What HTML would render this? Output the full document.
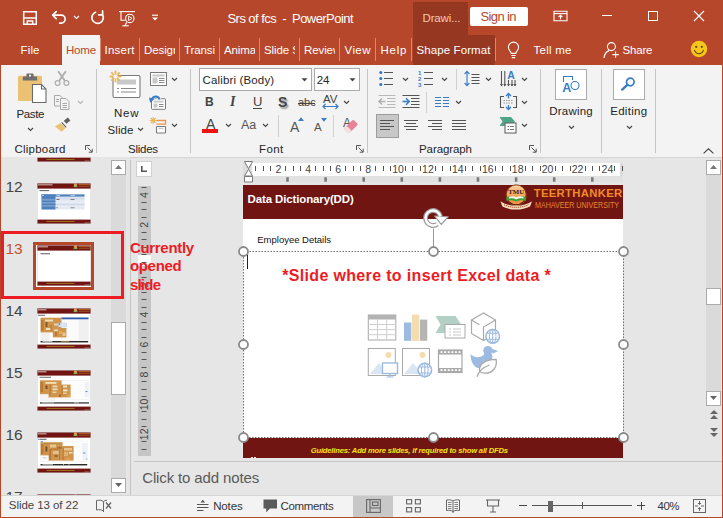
<!DOCTYPE html>
<html lang="en">
<head>
<meta charset="utf-8">
<title>Srs of fcs - PowerPoint</title>
<style>
html,body{margin:0;padding:0;}
body{width:723px;height:518px;overflow:hidden;background:#e6e6e6;font-family:"Liberation Sans",sans-serif;}
#app{position:relative;width:723px;height:518px;overflow:hidden;background:#e6e6e6;}
.a{position:absolute;}
.t{position:absolute;white-space:nowrap;line-height:1;font-size:11.5px;color:#262626;transform-origin:0 0;}
.w{color:#fff;}
svg{position:absolute;overflow:visible;}
/* sections */
#titlebar{left:0;top:0;width:723px;height:65px;background:#b7472a;}
#ribbon{left:1px;top:65px;width:721px;height:91.500px;background:#f3f3f3;border-bottom:1px solid #d4d4d4;}
#hometab{left:62px;top:35px;width:38px;height:31px;background:#f3f3f3;}
#ctxtab1{left:413px;top:2px;width:55px;height:33px;background:#963721;}
#ctxtab2{left:413px;top:35px;width:82px;height:30px;background:#963721;}
.sep{position:absolute;width:1px;background:#c6c6c6;}
.tsep{position:absolute;width:1px;background:#d58a75;top:38px;height:23px;}
</style>
</head>
<body>
<div id="app">

<!-- ===== TITLE BAR + TABS ===== -->
<div class="a" id="titlebar"></div>
<div class="a" id="ctxtab1"></div>
<div class="a" id="ctxtab2"></div>
<div class="a" id="hometab"></div>


<!-- quick access toolbar -->
<svg style="left:22px;top:10px" width="16" height="16" viewBox="0 0 16 16" fill="none" stroke="#fff" stroke-width="1.500">
  <path d="M1.700 1.700h12.600v12.600H1.700z"/><path d="M1.700 8h12.600"/><path d="M5.300 14.300v-3.400h5.400v3.400"/>
</svg>
<svg style="left:51px;top:10px" width="17" height="15" viewBox="0 0 17 15" fill="none" stroke="#fff" stroke-width="1.700" stroke-linecap="round" stroke-linejoin="round">
  <path d="M5.2 1.6 1.7 5.1l3.5 3.5"/><path d="M2 5.1h8.2a4 4 0 0 1 0 8H8.6"/>
</svg>
<svg style="left:73px;top:15px" width="7" height="5" viewBox="0 0 7 5" fill="none" stroke="#fff" stroke-width="1.1"><path d="M1 1l2.5 2.5L6 1"/></svg>
<svg style="left:90px;top:10px" width="16" height="15" viewBox="0 0 16 15" fill="none" stroke="#fff" stroke-width="1.700" stroke-linecap="round" stroke-linejoin="round">
  <path d="M5.600 2.300A5.700 5.700 0 1 0 12.400 4.600"/><path d="M12.600 0.900v3.900H8.700"/>
</svg>
<svg style="left:118px;top:10px" width="18" height="17" viewBox="0 0 18 17" fill="none" stroke="#fff" stroke-width="1.1">
  <path d="M1 1.6h16"/><path d="M3 1.6v8.6h4.6"/><circle cx="11.8" cy="8.4" r="4.2"/><path d="M10.6 6.2v4.4l3.4-2.2z" stroke-width="0.9"/><path d="M8.6 12.2l-1.6 3.6"/><path d="M4.4 15.8h6.4"/>
</svg>
<svg style="left:151px;top:14px" width="8" height="8" viewBox="0 0 8 8"><path d="M1 1.2h6" stroke="#fff" stroke-width="1.1"/><path d="M1 3.4h6L4 6.6z" fill="#fff"/></svg>

<span class="t w" id="ttl" style="top:11.5px;font-size:13px;letter-spacing:-0.56px;left:227.5px;">Srs of fcs &nbsp;- &nbsp;PowerPoint</span>
<span class="t" id="drawi" style="top:12.5px;font-size:11.5px;color:#f1c7b8;letter-spacing:-0.14px;left:422.5px;">Drawi...</span>
<div class="a" style="left:470px;top:7px;width:58px;height:19px;background:#fff;border-radius:2px;"></div>
<span class="t" id="signin" style="top:10px;font-size:13px;color:#b7472a;letter-spacing:-0.63px;left:480.5px;">Sign in</span>

<!-- window controls -->
<svg style="left:553px;top:10px" width="15" height="12" viewBox="0 0 15 12" fill="none" stroke="#fff" stroke-width="1.1">
  <path d="M1 1.2h13v9.6H1z"/><path d="M1 3.6h13"/><path d="M7.5 9.4V5.4"/><path d="M5.6 7l1.9-1.8L9.4 7"/>
</svg>
<div class="a" style="left:602px;top:15px;width:10px;height:1px;background:#fff;"></div>
<div class="a" style="left:648px;top:11px;width:8px;height:8px;border:1px solid #fff;"></div>
<svg style="left:694px;top:11px" width="10" height="10" viewBox="0 0 10 10" stroke="#fff" stroke-width="1.1"><path d="M0 0l10 10M10 0L0 10"/></svg>

<!-- tabs -->
<span class="t w" id="tb0" style="top:44.5px;letter-spacing:0.16px;left:20.5px;">File</span>
<div class="a" style="left:66px;top:41px;width:30px;height:22px;overflow:hidden;"><span class="t" id="tb1" style="left:0;top:3.500px;color:#b7472a;letter-spacing:-0.2px;">Home</span></div>
<span class="t w" id="tb2" style="top:44.5px;letter-spacing:0.25px;left:104.5px;">Insert</span>
<div class="a" style="left:144px;top:41px;width:31px;height:22px;overflow:hidden;"><span class="t w" id="tb3" style="left:0;top:3.500px;letter-spacing:-0.1px;">Design</span></div>
<div class="a" style="left:184px;top:41px;width:31px;height:22px;overflow:hidden;"><span class="t w" id="tb4" style="left:0;top:3.500px;letter-spacing:-0.1px;">Transitions</span></div>
<div class="a" style="left:224px;top:41px;width:31px;height:22px;overflow:hidden;"><span class="t w" id="tb5" style="left:0;top:3.500px;letter-spacing:-0.1px;">Animations</span></div>
<div class="a" style="left:264px;top:41px;width:31px;height:22px;overflow:hidden;"><span class="t w" id="tb6" style="left:0;top:3.500px;letter-spacing:-0.1px;">Slide Show</span></div>
<div class="a" style="left:304px;top:41px;width:31px;height:22px;overflow:hidden;"><span class="t w" id="tb7" style="left:0;top:3.500px;letter-spacing:-0.1px;">Review</span></div>
<span class="t w" id="tb8" style="top:44.5px;letter-spacing:0.42px;left:344.5px;">View</span>
<span class="t w" id="tb9" style="top:44.5px;letter-spacing:0.78px;left:380.5px;">Help</span>
<span class="t w" id="tb10" style="top:44.5px;letter-spacing:0.10px;left:416.5px;">Shape Format</span>
<span class="t w" id="tb11" style="top:44.5px;letter-spacing:0.26px;left:533.5px;">Tell me</span>
<span class="t w" id="tb12" style="top:44.5px;letter-spacing:-0.17px;left:622.5px;">Share</span>
<div class="tsep" style="left:100px"></div><div class="tsep" style="left:139px"></div><div class="tsep" style="left:179px"></div>
<div class="tsep" style="left:219px"></div><div class="tsep" style="left:259px"></div><div class="tsep" style="left:299px"></div>
<div class="tsep" style="left:339px"></div><div class="tsep" style="left:375px"></div><div class="tsep" style="left:411px"></div>
<div class="tsep" style="left:495px"></div>
<!-- bulb -->
<svg style="left:507px;top:41px" width="13" height="18" viewBox="0 0 13 18" fill="none" stroke="#fff" stroke-width="1.1">
  <path d="M4.2 12.4c0-2-2.8-3-2.8-6.2a5.1 5.1 0 0 1 10.2 0c0 3.200-2.800 4.200-2.800 6.200z"/><path d="M4.400 14.500h4.200M4.800 16.600h3.400"/>
</svg>
<!-- share person -->
<svg style="left:603px;top:41px" width="17" height="18" viewBox="0 0 17 18" fill="none" stroke="#fff" stroke-width="1.1">
  <circle cx="8.400" cy="5.600" r="4"/><path d="M1 17c.4-4.200 2.600-6.600 5.200-7.400"/><path d="M12.600 10.400v6.400M9.400 13.600h6.400"/>
</svg>
<!-- smiley -->
<svg style="left:690px;top:40px" width="18" height="18" viewBox="0 0 18 18">
  <circle cx="9" cy="9" r="8.200" fill="#f7c61a"/><circle cx="6.200" cy="6.800" r="1.100" fill="#5a4410"/><circle cx="11.800" cy="6.800" r="1.100" fill="#5a4410"/>
  <path d="M4.600 10.400c1 2.600 2.600 3.400 4.400 3.400s3.400-.8 4.400-3.400" fill="none" stroke="#5a4410" stroke-width="1.100" stroke-linecap="round"/>
</svg>

<!-- ===== RIBBON ===== -->
<div class="a" id="ribbon"></div>

<div class="sep" style="left:96px;top:69px;height:84px;"></div>
<div class="sep" style="left:190px;top:69px;height:84px;"></div>
<div class="sep" style="left:367px;top:69px;height:84px;"></div>
<div class="sep" style="left:540px;top:69px;height:84px;"></div>
<div class="sep" style="left:601px;top:69px;height:84px;"></div>
<div class="sep" style="left:655px;top:69px;height:84px;"></div>

<svg style="left:17px;top:72px" width="30" height="32" viewBox="0 0 30 32">
  <rect x="1" y="3.800" width="24" height="25.200" rx="1.500" fill="#ebc273"/>
  <path d="M5.800 8.400V5.600a1 1 0 0 1 1-1h2.600V2.400a1 1 0 0 1 1-1h5.200a1 1 0 0 1 1 1v2.200h2.600a1 1 0 0 1 1 1v2.800z" fill="#6e6e6e"/>
  <circle cx="13" cy="3.700" r="1.100" fill="#f3f3f3"/>
  <path d="M15.500 12.500h9l4.500 4.500v13.500h-13.500z" fill="#fff" stroke="#6a6a6a" stroke-width="1.100"/>
  <path d="M24.500 12.500v4.500h4.500" fill="none" stroke="#6a6a6a" stroke-width="1.100"/>
</svg>
<span class="t" id="rPaste" style="top:108.7px;letter-spacing:-0.36px;left:16.5px;">Paste</span>
<svg style="left:27.0px;top:127.0px" width="7" height="5" viewBox="0 0 7 5" fill="none" stroke="#444" stroke-width="1.1"><path d="M1 1l2.500 2.500L6 1"/></svg>

<svg style="left:54px;top:70px" width="16" height="17" viewBox="0 0 16 17" fill="none" stroke="#b0b0b0" stroke-width="1.300">
  <circle cx="3.600" cy="13" r="2.400"/><circle cx="12.400" cy="13" r="2.400"/><path d="M5 11L11.800 1.200M11 11L4.200 1.200" stroke-width="2"/>
</svg>
<svg style="left:54px;top:95px" width="16" height="15" viewBox="0 0 16 15" fill="#f3f3f3" stroke="#a9a9a9" stroke-width="1">
  <path d="M0.500 0.500h5.500l2.500 2.500v8h-8z"/><path d="M6.500 3.500h5.500l3 3v8h-8.500z"/><path d="M8.500 8.500h4.500M8.500 10.500h4.500M8.500 12.500h4.500M2 4.500h3M2 6.500h3"/>
</svg>
<svg style="left:77.0px;top:99.5px" width="7" height="5" viewBox="0 0 7 5" fill="none" stroke="#b5b5b5" stroke-width="1.1"><path d="M1 1l2.500 2.500L6 1"/></svg>

<svg style="left:54px;top:117px" width="18" height="16" viewBox="0 0 18 16">
  <path d="M9.800 3.800l4-3.400 2.600 3-4 3.400z" fill="#5f5f5f"/>
  <path d="M8 5l4.600 5-0.800 0.800-4.600-5z" fill="#5f5f5f"/>
  <path d="M6.600 6L1 9.600l6.600 5.200 3.800-3.600z" fill="#ebc273"/>
</svg>
<span class="t" id="rClip" style="top:143.5px;letter-spacing:0.22px;left:14.5px;">Clipboard</span>
<svg style="left:85px;top:145px" width="8" height="8" viewBox="0 0 8 8" fill="none" stroke="#555" stroke-width="1"><path d="M0.500 5V0.500H5"/><path d="M2.500 2.500l4.500 4.500"/><path d="M7.200 3.800v3.400H3.800"/></svg>

<svg style="left:109px;top:70px" width="33" height="29" viewBox="0 0 33 29">
  <rect x="4" y="5.500" width="27" height="22" rx="1.500" fill="#fff" stroke="#7a7a7a" stroke-width="1.100"/>
  <rect x="8" y="9.500" width="19" height="5" fill="#c8c8c8"/>
  <path d="M8 18.500h2M12 18.500h15M8 22h2M12 22h15" stroke="#8a8a8a" stroke-width="1"/>
  <g stroke="#e9b858" stroke-width="1.800"><path d="M6.500 0.500v12M0.500 6.500h12M2.300 2.300l8.400 8.400M10.700 2.300l-8.400 8.400"/></g>
  <circle cx="6.500" cy="6.500" r="2.200" fill="#f3f3f3"/>
</svg>
<span class="t" id="rNew" style="top:108px;letter-spacing:0.74px;left:114.0px;">New</span>
<span class="t" id="rSlide" style="top:124.5px;letter-spacing:0.11px;left:107.5px;">Slide</span>
<svg style="left:136.5px;top:127.0px" width="7" height="5" viewBox="0 0 7 5" fill="none" stroke="#444" stroke-width="1.1"><path d="M1 1l2.500 2.500L6 1"/></svg>

<svg style="left:150px;top:72px" width="17" height="14" viewBox="0 0 17 14" fill="none">
  <rect x="0.500" y="0.500" width="16" height="13" fill="#fff" stroke="#7a7a7a"/>
  <rect x="2.500" y="2.500" width="12" height="2" fill="#c8c8c8"/><rect x="2.500" y="5.500" width="5" height="6" fill="#c8c8c8"/>
  <path d="M9 6.500h5.500M9 8.500h5.500M9 10.500h5.500" stroke="#8a8a8a"/>
</svg><svg style="left:171.0px;top:77.0px" width="7" height="5" viewBox="0 0 7 5" fill="none" stroke="#444" stroke-width="1.1"><path d="M1 1l2.500 2.500L6 1"/></svg>

<svg style="left:149px;top:95px" width="18" height="15" viewBox="0 0 18 15" fill="none">
  <rect x="2.500" y="3.700" width="14" height="10.600" rx="0.800" fill="#fff" stroke="#7a7a7a"/>
  <rect x="4.500" y="5.700" width="10" height="1.800" fill="#c8c8c8"/><rect x="4.500" y="8.500" width="4" height="4" fill="#c8c8c8"/>
  <path d="M10 9.500h4.500M10 11.500h4.500" stroke="#8a8a8a"/>
  <path d="M10.600 4.600C9.600 0.600 4.400 0.200 2.600 4.600" stroke="#f3f3f3" stroke-width="3.600"/>
  <path d="M10.600 4.600C9.600 0.600 4.400 0.200 2.600 4.600" stroke="#3b7dc4" stroke-width="1.900"/><path d="M0 2.600l5.400 1.300-4.300 3.900z" fill="#3b7dc4"/>
</svg>
<svg style="left:149px;top:116px" width="18" height="18" viewBox="0 0 18 18" fill="none">
  <g stroke="#e9b858" stroke-width="1.100"><path d="M4.200 1v7M0.700 4.500h7M1.700 2l5 5M6.700 2l-5 5"/></g>
  <path d="M7.500 4.500h9v3.700h-9" stroke="#e9934e" stroke-width="1.300"/>
  <rect x="7.500" y="10.500" width="9" height="6.500" rx="0.600" fill="#fff" stroke="#7a7a7a" stroke-width="1.100"/>
  <path d="M9.500 12.500h5" stroke="#c8c8c8" stroke-width="1.400"/>
</svg><svg style="left:171.0px;top:123.0px" width="7" height="5" viewBox="0 0 7 5" fill="none" stroke="#444" stroke-width="1.1"><path d="M1 1l2.500 2.500L6 1"/></svg>
<span class="t" id="rSlides" style="top:143.5px;letter-spacing:-0.26px;left:128.0px;">Slides</span>

<div class="a" style="left:199px;top:68px;width:111px;height:21px;background:#fff;border:1px solid #ababab;"></div>
<div class="a" style="left:314px;top:68px;width:44px;height:21px;background:#fff;border:1px solid #ababab;"></div>
<span class="t" id="rCal" style="top:75px;letter-spacing:0.15px;left:202.5px;">Calibri (Body)</span>
<span class="t" id="r24" style="top:75px;letter-spacing:-0.09px;left:316.8px;">24</span>
<svg style="left:301.0px;top:78.0px" width="7" height="4" viewBox="0 0 7 4"><path d="M0.500 0.300h6L3.500 3.600z" fill="#444"/></svg><svg style="left:349.0px;top:78.0px" width="7" height="4" viewBox="0 0 7 4"><path d="M0.500 0.300h6L3.500 3.600z" fill="#444"/></svg>

<span class="t" id="rB" style="left:205px;top:96px;font-weight:bold;font-size:12px;color:#444;">B</span>
<span class="t" id="rI" style="left:230px;top:94.500px;font-style:italic;font-family:'Liberation Serif',serif;font-size:14px;font-weight:bold;color:#444;">I</span>
<span class="t" id="rU" style="left:253px;top:95px;font-size:13px;color:#444;">U</span>
<div class="a" style="left:253px;top:108px;width:9px;height:1px;background:#444;"></div>
<span class="t" id="rS" style="left:278px;top:95px;font-weight:bold;font-size:14px;color:#444;text-shadow:1.500px 1.500px 1.500px #999;">S</span>
<span class="t" id="rabc" style="left:298px;top:97px;font-size:11px;color:#444;">abc</span>
<div class="a" style="left:298px;top:102.500px;width:17px;height:1px;background:#444;"></div>
<span class="t" id="rAV" style="left:323px;top:94px;font-size:11.500px;color:#444;">AV</span>
<svg style="left:322px;top:103px" width="17" height="7" viewBox="0 0 17 7" fill="none" stroke="#3b7dc4" stroke-width="1.200"><path d="M1 3.500h15M3.500 1L1 3.500 3.500 6M13.500 1L16 3.500 13.500 6"/></svg>
<svg style="left:343.0px;top:100.0px" width="7" height="5" viewBox="0 0 7 5" fill="none" stroke="#444" stroke-width="1.1"><path d="M1 1l2.500 2.500L6 1"/></svg>

<span class="t" id="rA" style="left:206px;top:117px;font-size:14px;color:#444;">A</span>
<div class="a" style="left:202px;top:129px;width:16px;height:4px;background:#ee1111;"></div>
<svg style="left:224.5px;top:123.0px" width="7" height="5" viewBox="0 0 7 5" fill="none" stroke="#444" stroke-width="1.1"><path d="M1 1l2.500 2.500L6 1"/></svg>
<span class="t" id="rAa" style="left:241px;top:119px;font-size:12.500px;color:#555;">Aa</span>
<svg style="left:262.0px;top:123.0px" width="7" height="5" viewBox="0 0 7 5" fill="none" stroke="#444" stroke-width="1.1"><path d="M1 1l2.500 2.500L6 1"/></svg>
<div class="sep" style="left:278px;top:115px;height:22px;background:#d0d0d0;"></div>
<span class="t" id="rAg" style="left:290px;top:119.5px;font-size:14px;color:#555;">A</span>
<svg style="left:298px;top:117px" width="6" height="4" viewBox="0 0 6 4"><path d="M0 4h6L3 0.300z" fill="#3b7dc4"/></svg>
<span class="t" id="rAs" style="left:314px;top:122px;font-size:11.500px;color:#555;">A</span>
<svg style="left:321px;top:118px" width="6" height="4" viewBox="0 0 6 4"><path d="M0 0h6L3 3.700z" fill="#3b7dc4"/></svg>
<div class="sep" style="left:333px;top:115px;height:22px;background:#d0d0d0;"></div>
<span class="t" id="rAc" style="left:343px;top:117px;font-size:12px;color:#555;">A</span>
<svg style="left:344px;top:119px" width="14" height="14" viewBox="0 0 14 14"><g transform="rotate(-45 7 7.500)"><rect x="0.500" y="4" width="13" height="7" rx="1.500" fill="#e8849a"/><rect x="0.500" y="4" width="4" height="7" rx="1.200" fill="#f6dfe4"/></g></svg>
<span class="t" id="rFont" style="top:143.5px;letter-spacing:0.39px;left:259.0px;">Font</span>
<svg style="left:356px;top:145px" width="8" height="8" viewBox="0 0 8 8" fill="none" stroke="#555" stroke-width="1"><path d="M0.500 5V0.500H5"/><path d="M2.500 2.500l4.500 4.500"/><path d="M7.200 3.800v3.400H3.800"/></svg>

<svg style="left:379px;top:70px" width="15" height="17" viewBox="0 0 15 17">
  <g fill="#2f72c0"><circle cx="1.800" cy="2.500" r="1.500"/><circle cx="1.800" cy="8.500" r="1.500"/><circle cx="1.800" cy="14.500" r="1.500"/></g>
  <path d="M5 2.500h9M5 8.500h9M5 14.500h9" stroke="#555" stroke-width="1"/>
</svg><svg style="left:401.5px;top:77.0px" width="7" height="5" viewBox="0 0 7 5" fill="none" stroke="#444" stroke-width="1.1"><path d="M1 1l2.500 2.500L6 1"/></svg>

<svg style="left:418px;top:70px" width="16" height="17" viewBox="0 0 16 17">
  <g fill="#3b7dc4" font-family="Liberation Sans, sans-serif" font-size="6" font-weight="bold"><text x="0" y="5">1</text><text x="0" y="11">2</text><text x="0" y="17">3</text></g>
  <path d="M6 2.500h9M6 8.500h9M6 14.500h9" stroke="#555" stroke-width="1"/>
</svg><svg style="left:440.5px;top:77.0px" width="7" height="5" viewBox="0 0 7 5" fill="none" stroke="#444" stroke-width="1.1"><path d="M1 1l2.500 2.500L6 1"/></svg>
<div class="sep" style="left:456px;top:69px;height:21px;background:#d0d0d0;"></div>

<svg style="left:464px;top:70px" width="16" height="17" viewBox="0 0 16 17" fill="none">
  <path d="M3 1.500v14M0.600 4L3 1.400 5.400 4M0.600 13L3 15.600 5.400 13" stroke="#3b7dc4" stroke-width="1.150"/>
  <path d="M7.500 4.500h8M7.500 7.500h8M7.500 10.500h8M7.500 13.500h8" stroke="#555" stroke-width="1"/>
</svg><svg style="left:484.5px;top:77.0px" width="7" height="5" viewBox="0 0 7 5" fill="none" stroke="#444" stroke-width="1.1"><path d="M1 1l2.500 2.500L6 1"/></svg>

<svg style="left:500px;top:70px" width="17" height="18" viewBox="0 0 17 18" fill="none">
  <path d="M1.500 1v15M4.800 1v15M8.500 10v6M12 10v6M15 10v6" stroke="#555" stroke-width="1.100"/>
  <path d="M0 14l1.500 2.500L3 14zM3.300 14l1.500 2.500L6.300 14zM7 14l1.500 2.500L10 14zM10.500 14l1.500 2.500 1.500-2.500zM13.500 14l1.500 2.500 1.500-2.500z" fill="#555"/>
  <text x="7.200" y="8.500" fill="#3b7dc4" font-family="Liberation Sans, sans-serif" font-size="10.500" font-weight="bold">A</text>
</svg><svg style="left:521.0px;top:77.0px" width="7" height="5" viewBox="0 0 7 5" fill="none" stroke="#444" stroke-width="1.1"><path d="M1 1l2.500 2.500L6 1"/></svg>

<svg style="left:500px;top:93px" width="17" height="17" viewBox="0 0 17 17" fill="none">
  <path d="M4 3.500H0.500v11H4M13 3.500h3.500v11H13" stroke="#555" stroke-width="1.100"/>
  <path d="M3.500 7.500h10M3.500 10h10" stroke="#999" stroke-width="1" stroke-dasharray="1.500 1"/>
  <path d="M8.500 0.500v5M6 3L8.500 0.500 11 3M8.500 12v4.500M6 14l2.500 2.500L11 14" stroke="#3b7dc4" stroke-width="1.300"/>
</svg><svg style="left:521.0px;top:100.0px" width="7" height="5" viewBox="0 0 7 5" fill="none" stroke="#444" stroke-width="1.1"><path d="M1 1l2.500 2.500L6 1"/></svg>

<svg style="left:499px;top:116px" width="18" height="18" viewBox="0 0 18 18">
  <path d="M0.500 1h11.500l4 4.500-4 4.500H0.500l3-4.500z" fill="#4fa58a"/>
  <rect x="6" y="7" width="11" height="10" fill="#fff" stroke="#666" stroke-width="1.100"/>
  <path d="M8.500 10.500h1.500M11 10.500h4M8.500 13.500h1.500M11 13.500h4" stroke="#777" stroke-width="1"/>
</svg><svg style="left:521.0px;top:123.0px" width="7" height="5" viewBox="0 0 7 5" fill="none" stroke="#444" stroke-width="1.1"><path d="M1 1l2.500 2.500L6 1"/></svg>

<svg style="left:378px;top:94px" width="18" height="15" viewBox="0 0 18 15" fill="none">
  <path d="M0.500 1.500h17M0.500 13.500h17M9 4.500h8.500M9 7.500h8.500M9 10.500h8.500" stroke="#b9b9b9" stroke-width="1"/>
  <path d="M1 7.500h6.500" stroke="#b0b0b0" stroke-width="1.500"/><path d="M4 4.500l-3 3 3 3" stroke="#b0b0b0" stroke-width="1.500"/>
</svg>
<svg style="left:402px;top:94px" width="18" height="15" viewBox="0 0 18 15" fill="none">
  <path d="M0.500 1.500h17M0.500 13.500h17M9 4.500h8.500M9 7.500h8.500M9 10.500h8.500" stroke="#555" stroke-width="1"/>
  <path d="M0.500 7.500h6.500" stroke="#3b7dc4" stroke-width="1.600"/><path d="M4 4.300l3.200 3.200-3.200 3.200" stroke="#3b7dc4" stroke-width="1.600"/>
</svg>
<div class="sep" style="left:426px;top:92px;height:21px;background:#d0d0d0;"></div>
<svg style="left:435px;top:96px" width="14" height="12" viewBox="0 0 14 12" fill="none" stroke="#3b7dc4" stroke-width="1.200">
  <path d="M0 1.500h6M8 1.500h6M0 4.500h6M8 4.500h6M0 7.500h6M8 7.500h6M0 10.500h6M8 10.500h6"/>
</svg><svg style="left:455.0px;top:100.0px" width="7" height="5" viewBox="0 0 7 5" fill="none" stroke="#444" stroke-width="1.1"><path d="M1 1l2.500 2.500L6 1"/></svg>

<div class="a" style="left:376px;top:114px;width:21px;height:22px;background:#c8c8c8;border:1px solid #9d9d9d;"></div>
<svg style="left:380px;top:119px" width="15" height="12" viewBox="0 0 15 12" fill="none" stroke="#555" stroke-width="1"><path d="M0 1.500h14M0 4.500h10M0 7.500h14M0 10.500h10"/></svg>
<svg style="left:403px;top:119px" width="16" height="12" viewBox="0 0 16 12" fill="none" stroke="#555" stroke-width="1"><path d="M1 1.500h14M3 4.500h10M1 7.500h14M3 10.500h10"/></svg>
<svg style="left:427px;top:119px" width="16" height="12" viewBox="0 0 16 12" fill="none" stroke="#555" stroke-width="1"><path d="M1 1.500h14M5 4.500h10M1 7.500h14M5 10.500h10"/></svg>
<svg style="left:451px;top:119px" width="16" height="12" viewBox="0 0 16 12" fill="none" stroke="#555" stroke-width="1"><path d="M1 1.500h14M1 4.500h14M1 7.500h14M1 10.500h14"/></svg>
<span class="t" id="rPara" style="top:143.5px;letter-spacing:-0.09px;left:419.0px;">Paragraph</span>
<svg style="left:529px;top:145px" width="8" height="8" viewBox="0 0 8 8" fill="none" stroke="#555" stroke-width="1"><path d="M0.500 5V0.500H5"/><path d="M2.500 2.500l4.500 4.500"/><path d="M7.200 3.800v3.400H3.800"/></svg>

<div class="a" style="left:555px;top:69px;width:30px;height:28.500px;background:#fff;border:1px solid #ababab;"></div>
<svg style="left:562px;top:75px" width="18" height="18" viewBox="0 0 18 18" fill="none">
  <path d="M1.500 7V1.500h9V5" stroke="#3b7dc4" stroke-width="1.100"/>
  <circle cx="13" cy="10.500" r="4" fill="#fff" stroke="#3b7dc4" stroke-width="1.100"/>
  <text x="0.200" y="17" fill="#3b7dc4" font-family="Liberation Sans, sans-serif" font-size="12.500" font-weight="bold">A</text>
</svg>
<span class="t" id="rDraw" style="top:106px;letter-spacing:0.20px;left:549.3px;">Drawing</span>
<svg style="left:568.0px;top:125.0px" width="7" height="5" viewBox="0 0 7 5" fill="none" stroke="#444" stroke-width="1.1"><path d="M1 1l2.500 2.500L6 1"/></svg>
<div class="a" style="left:613px;top:69px;width:30px;height:28.500px;background:#fff;border:1px solid #ababab;"></div>
<svg style="left:621px;top:77px" width="15" height="14" viewBox="0 0 15 14" fill="none" stroke="#3b7dc4">
  <circle cx="9.300" cy="5" r="3.800" stroke-width="1.700"/><path d="M6.300 7.800L1.200 12.600" stroke-width="2.400" stroke-linecap="round"/>
</svg>
<span class="t" id="rEdit" style="top:106px;letter-spacing:0.30px;left:610.2px;">Editing</span>
<svg style="left:626.0px;top:125.0px" width="7" height="5" viewBox="0 0 7 5" fill="none" stroke="#444" stroke-width="1.1"><path d="M1 1l2.500 2.500L6 1"/></svg>
<svg style="left:703px;top:147.500px" width="11" height="6" viewBox="0 0 11 6" fill="none" stroke="#444" stroke-width="1.100"><path d="M0.600 5.400L5.500 0.800 10.400 5.400"/></svg>

<!-- ===== WORKSPACE ===== -->
<div class="a" style="left:1px;top:157px;width:129px;height:338px;overflow:hidden;background:#e6e6e6;"><div class="a" style="left:-1px;top:-157px;width:140px;height:518px;">
<svg style="left:36.500px;top:121.3px" width="54" height="41" viewBox="0 0 54 41"><rect x="0" y="0" width="54" height="41" fill="#fff"/><rect x="0" y="0" width="54" height="5.600" fill="#701512"/><rect x="0" y="36.600" width="54" height="4.400" fill="#701512"/><rect x="1" y="1.400" width="10" height="0.900" fill="#e6d6d2"/><rect x="36.800" y="0.500" width="3.400" height="2.600" rx="1.200" fill="#e09a52"/><rect x="36.600" y="2.800" width="3.800" height="1.300" fill="#7fae5a"/><rect x="41.500" y="1.300" width="11.500" height="0.900" fill="#c9782c"/><rect x="41.800" y="3.100" width="10.700" height="0.800" fill="#9a5424"/><rect x="9.500" y="37.900" width="28" height="0.900" fill="#a5801c"/><rect x="47.500" y="39.600" width="5" height="0.700" fill="#a88a84"/><rect x="0.250" y="0.250" width="53.500" height="40.500" fill="none" stroke="#cfcfcf" stroke-width="0.500"/></svg>
<svg style="left:36.500px;top:183.3px" width="54" height="41" viewBox="0 0 54 41"><rect x="0" y="0" width="54" height="41" fill="#fff"/><rect x="0" y="0" width="54" height="5.600" fill="#701512"/><rect x="0" y="36.600" width="54" height="4.400" fill="#701512"/><rect x="1" y="1.400" width="14.500" height="0.900" fill="#e6d6d2"/><rect x="36.800" y="0.500" width="3.400" height="2.600" rx="1.200" fill="#e09a52"/><rect x="36.600" y="2.800" width="3.800" height="1.300" fill="#7fae5a"/><rect x="41.500" y="1.300" width="11.500" height="0.900" fill="#c9782c"/><rect x="41.800" y="3.100" width="10.700" height="0.800" fill="#9a5424"/><rect x="9.500" y="37.900" width="28" height="0.900" fill="#a5801c"/><rect x="47.500" y="39.600" width="5" height="0.700" fill="#a88a84"/><rect x="2.500" y="7.300" width="9.600" height="0.800" fill="#333"/><rect x="4.500" y="11.400" width="43" height="15.100" fill="#e4e9f3"/><rect x="4.500" y="14.600" width="43" height="2.600" fill="#d3dbea"/><rect x="4.500" y="20.200" width="43" height="2.600" fill="#d3dbea"/><rect x="4.500" y="11.400" width="43" height="2.200" fill="#4f81bd"/><rect x="4.500" y="11.400" width="14" height="15.100" fill="#4f81bd"/><path d="M4.500 16.900h43M4.500 19.900h43M4.500 22.900h43" stroke="#fff" stroke-width="0.400"/><rect x="19.500" y="16.100" width="3" height="0.800" fill="#555"/><rect x="33.500" y="16.100" width="4" height="0.800" fill="#666"/><rect x="19.500" y="24.400" width="1.200" height="0.800" fill="#555"/><rect x="33.500" y="24.400" width="4" height="0.800" fill="#777"/><rect x="5" y="12.100" width="2" height="0.700" fill="#dfe8f5"/><rect x="19.500" y="12.100" width="3.500" height="0.700" fill="#dfe8f5"/><rect x="33.500" y="12.100" width="4.500" height="0.700" fill="#dfe8f5"/><rect x="0.250" y="0.250" width="53.500" height="40.500" fill="none" stroke="#cfcfcf" stroke-width="0.500"/></svg>
<div class="a" style="left:33px;top:242px;width:55px;height:42px;border:3px solid #b7472a;background:#fff;"></div>
<svg style="left:36.500px;top:245.3px" width="54" height="41" viewBox="0 0 54 41"><rect x="0" y="0" width="54" height="41" fill="#fff"/><rect x="0" y="0" width="54" height="5.600" fill="#701512"/><rect x="0" y="36.600" width="54" height="4.400" fill="#701512"/><rect x="1" y="1.400" width="10" height="0.900" fill="#e6d6d2"/><rect x="36.800" y="0.500" width="3.400" height="2.600" rx="1.200" fill="#e09a52"/><rect x="36.600" y="2.800" width="3.800" height="1.300" fill="#7fae5a"/><rect x="41.500" y="1.300" width="11.500" height="0.900" fill="#c9782c"/><rect x="41.800" y="3.100" width="10.700" height="0.800" fill="#9a5424"/><rect x="9.500" y="37.900" width="28" height="0.900" fill="#a5801c"/><rect x="47.500" y="39.600" width="5" height="0.700" fill="#a88a84"/><rect x="3.500" y="8.400" width="9.500" height="0.800" fill="#333"/><rect x="0.250" y="0.250" width="53.500" height="40.500" fill="none" stroke="#cfcfcf" stroke-width="0.500"/></svg>
<svg style="left:36.500px;top:307.6px" width="54" height="41" viewBox="0 0 54 41"><rect x="0" y="0" width="54" height="41" fill="#fff"/><rect x="0" y="0" width="54" height="5.600" fill="#701512"/><rect x="0" y="36.600" width="54" height="4.400" fill="#701512"/><rect x="1" y="1.400" width="8.500" height="0.900" fill="#e6d6d2"/><rect x="36.800" y="0.500" width="3.400" height="2.600" rx="1.200" fill="#e09a52"/><rect x="36.600" y="2.800" width="3.800" height="1.300" fill="#7fae5a"/><rect x="41.500" y="1.300" width="11.500" height="0.900" fill="#c9782c"/><rect x="41.800" y="3.100" width="10.700" height="0.800" fill="#9a5424"/><rect x="9.500" y="37.900" width="28" height="0.900" fill="#a5801c"/><rect x="47.500" y="39.600" width="5" height="0.700" fill="#a88a84"/><rect x="1" y="6.800" width="7" height="0.800" fill="#444"/><rect x="24.400" y="9.500" width="27.100" height="23.500" fill="#fbfbfb" stroke="#dcdcdc" stroke-width="0.300"/><rect x="41.700" y="11.500" width="9.500" height="21" fill="#f0f0f0"/><rect x="24.400" y="9.500" width="27.100" height="1.800" fill="#2b5ab0"/><rect x="3.500" y="24.400" width="9" height="8.600" fill="#efefef"/><rect x="3.5" y="9.7" width="20.9" height="14.7" fill="#cf954f"/><rect x="15.8" y="20" width="13.6" height="9.4" fill="#cf954f"/><rect x="4" y="12" width="2.5" height="11" fill="#b87a34"/><rect x="8" y="11.5" width="8" height="2" fill="#f0e0b0"/><rect x="8.5" y="14" width="2" height="5" fill="#8a5a26"/><rect x="9" y="20" width="5" height="2" fill="#f0dfb4"/><rect x="13.5" y="17" width="1.2" height="6" fill="#b57a35"/><rect x="17" y="15.5" width="5" height="2" fill="#e9d2a4"/><rect x="17" y="21.5" width="4" height="1.6" fill="#efe0b8"/><rect x="18" y="24" width="2" height="4" fill="#b87a34"/><rect x="22" y="23" width="3" height="3" fill="#f1a64a"/><rect x="25.5" y="24.5" width="3" height="3.5" fill="#e8c890"/><rect x="21.400" y="15" width="8.400" height="4" fill="#dfe6f1" stroke="#a9b7cc" stroke-width="0.300"/><rect x="21.600" y="15.200" width="1.500" height="2" fill="#5b8fd8"/><rect x="3.500" y="33.100" width="47.700" height="1.300" fill="#151515"/><rect x="5.500" y="33.300" width="10" height="0.900" fill="#e8e8e8"/><rect x="24" y="33.400" width="8" height="0.700" fill="#c7a648"/><rect x="0.250" y="0.250" width="53.500" height="40.500" fill="none" stroke="#cfcfcf" stroke-width="0.500"/></svg>
<svg style="left:36.500px;top:369.6px" width="54" height="41" viewBox="0 0 54 41"><rect x="0" y="0" width="54" height="41" fill="#fff"/><rect x="0" y="0" width="54" height="5.600" fill="#701512"/><rect x="0" y="36.600" width="54" height="4.400" fill="#701512"/><rect x="1" y="1.400" width="8.500" height="0.900" fill="#e6d6d2"/><rect x="36.800" y="0.500" width="3.400" height="2.600" rx="1.200" fill="#e09a52"/><rect x="36.600" y="2.800" width="3.800" height="1.300" fill="#7fae5a"/><rect x="41.500" y="1.300" width="11.500" height="0.900" fill="#c9782c"/><rect x="41.800" y="3.100" width="10.700" height="0.800" fill="#9a5424"/><rect x="9.500" y="37.900" width="28" height="0.900" fill="#a5801c"/><rect x="47.500" y="39.600" width="5" height="0.700" fill="#a88a84"/><rect x="2.500" y="6.800" width="11.500" height="0.800" fill="#444"/><rect x="24.600" y="10.500" width="27.600" height="19.100" fill="#fcfcfc" stroke="#e0e0e0" stroke-width="0.300"/><rect x="47.700" y="12" width="4" height="15" fill="#eef1f6"/><rect x="48.500" y="21" width="2" height="1" fill="#5b8fd8"/><rect x="3.500" y="24" width="14" height="7" fill="#f4f4f4" stroke="#e2e2e2" stroke-width="0.300"/><rect x="3" y="10.3" width="21.6" height="13.8" fill="#cf954f"/><rect x="11.5" y="14.6" width="22.1" height="12.8" fill="#cf954f"/><rect x="3.5" y="12" width="2.5" height="10" fill="#b87a34"/><rect x="8.5" y="12" width="11" height="1.8" fill="#f2e3b6"/><rect x="8.5" y="15.5" width="2" height="3.5" fill="#7d5324"/><rect x="12.5" y="14.5" width="1.2" height="11" fill="#b57a35"/><rect x="15.5" y="15.5" width="5" height="1.8" fill="#ecd9b0"/><rect x="15.5" y="18.5" width="5" height="1.6" fill="#efe0c0"/><rect x="15.5" y="21.5" width="4" height="1.5" fill="#e9d2a4"/><rect x="24.5" y="15.5" width="1" height="10" fill="#b87a34"/><rect x="26" y="15.5" width="4" height="2" fill="#f1e2b8"/><rect x="26" y="19.5" width="4.5" height="1.8" fill="#f3ead2"/><rect x="26" y="22.5" width="4" height="1.5" fill="#e4c894"/><rect x="30.5" y="25" width="2.5" height="2" fill="#f1a64a"/><rect x="22" y="24.5" width="2" height="2.5" fill="#a96c2c"/><rect x="3" y="32.400" width="49" height="1.100" fill="#151515"/><rect x="5" y="32.600" width="12" height="0.700" fill="#e8e8e8"/><rect x="37" y="32.600" width="5" height="0.700" fill="#dfe6f1"/><rect x="0.250" y="0.250" width="53.500" height="40.500" fill="none" stroke="#cfcfcf" stroke-width="0.500"/></svg>
<svg style="left:36.500px;top:431.6px" width="54" height="41" viewBox="0 0 54 41"><rect x="0" y="0" width="54" height="41" fill="#fff"/><rect x="0" y="0" width="54" height="5.600" fill="#701512"/><rect x="0" y="36.600" width="54" height="4.400" fill="#701512"/><rect x="1" y="1.400" width="8.500" height="0.900" fill="#e6d6d2"/><rect x="36.800" y="0.500" width="3.400" height="2.600" rx="1.200" fill="#e09a52"/><rect x="36.600" y="2.800" width="3.800" height="1.300" fill="#7fae5a"/><rect x="41.500" y="1.300" width="11.500" height="0.900" fill="#c9782c"/><rect x="41.800" y="3.100" width="10.700" height="0.800" fill="#9a5424"/><rect x="9.500" y="37.900" width="28" height="0.900" fill="#a5801c"/><rect x="47.500" y="39.600" width="5" height="0.700" fill="#a88a84"/><rect x="1" y="6.800" width="1.600" height="0.800" fill="#2f5fc0"/><rect x="2.800" y="6.800" width="6.700" height="0.800" fill="#333"/><rect x="3.500" y="9" width="46.700" height="20.500" fill="#fcfcfc" stroke="#e0e0e0" stroke-width="0.300"/><rect x="45.200" y="11" width="5" height="17" fill="#eef1f6"/><rect x="46" y="20.500" width="2.400" height="1" fill="#5b8fd8"/><rect x="49.300" y="26.500" width="0.900" height="1" fill="#5b8fd8"/><rect x="3.800" y="9.200" width="2" height="1" fill="#4a86d8"/><rect x="3.5" y="10.2" width="22.1" height="13.4" fill="#cf954f"/><rect x="11.5" y="14" width="25.1" height="14.6" fill="#cf954f"/><rect x="4" y="12" width="2.5" height="10" fill="#b87a34"/><rect x="7" y="11" width="18" height="1.2" fill="#c08a48"/><rect x="8.5" y="14.5" width="1.8" height="5" fill="#6e4a20"/><rect x="13" y="12.5" width="6" height="3" fill="#e6c68e"/><rect x="14" y="16.5" width="7" height="1.2" fill="#b57a35"/><rect x="12.5" y="17" width="1.2" height="11" fill="#a96c2c"/><rect x="16" y="19" width="6" height="3" fill="#e3c088"/><rect x="17.5" y="23.5" width="3" height="1" fill="#5a3c1c"/><rect x="22" y="14" width="1" height="14" fill="#b87a34"/><rect x="25.6" y="16" width="1" height="12" fill="#b87a34"/><rect x="27" y="16" width="8" height="2.5" fill="#e6c68e"/><rect x="27" y="20" width="4" height="4" fill="#dcb274"/><rect x="32" y="20" width="3.5" height="1.5" fill="#efe0c0"/><rect x="29.5" y="26" width="3.5" height="1.8" fill="#f1a040"/><rect x="20" y="15.5" width="5" height="0.8" fill="#7d5324"/><rect x="3.500" y="23.600" width="7.800" height="5" fill="#fafafa"/><rect x="5.500" y="25.300" width="4" height="0.500" fill="#bbb"/><rect x="6" y="26.300" width="3" height="0.500" fill="#ccc"/><rect x="3.500" y="32.100" width="46.700" height="1.300" fill="#151515"/><rect x="5.500" y="32.400" width="10.500" height="0.800" fill="#e8e8e8"/><rect x="26" y="32.400" width="1" height="0.800" fill="#eee"/><rect x="31.500" y="32.400" width="1" height="0.800" fill="#eee"/><rect x="0.250" y="0.250" width="53.500" height="40.500" fill="none" stroke="#cfcfcf" stroke-width="0.500"/></svg>
<svg style="left:36.500px;top:493.5px" width="54" height="41" viewBox="0 0 54 41"><rect x="0" y="0" width="54" height="41" fill="#fff"/><rect x="0" y="0" width="54" height="5.600" fill="#701512"/><rect x="0" y="36.600" width="54" height="4.400" fill="#701512"/><rect x="1" y="1.400" width="9" height="0.900" fill="#e6d6d2"/><rect x="36.800" y="0.500" width="3.400" height="2.600" rx="1.200" fill="#e09a52"/><rect x="36.600" y="2.800" width="3.800" height="1.300" fill="#7fae5a"/><rect x="41.500" y="1.300" width="11.500" height="0.900" fill="#c9782c"/><rect x="41.800" y="3.100" width="10.700" height="0.800" fill="#9a5424"/><rect x="9.500" y="37.900" width="28" height="0.900" fill="#a5801c"/><rect x="47.500" y="39.600" width="5" height="0.700" fill="#a88a84"/><rect x="0.250" y="0.250" width="53.500" height="40.500" fill="none" stroke="#cfcfcf" stroke-width="0.500"/></svg>
<span class="t" id="n12" style="left:5.500px;top:179px;font-size:15.500px;color:#444;">12</span>
<span class="t" id="n13" style="left:5.500px;top:241px;font-size:15.500px;color:#c8512f;">13</span>
<span class="t" id="n14" style="left:5.500px;top:303px;font-size:15.500px;color:#444;">14</span>
<span class="t" id="n15" style="left:5.500px;top:365px;font-size:15.500px;color:#444;">15</span>
<span class="t" id="n16" style="left:5.500px;top:427px;font-size:15.500px;color:#444;">16</span>
<span class="t" id="n17" style="left:5.500px;top:489px;font-size:15.500px;color:#444;">17</span>
<div class="a" style="left:111px;top:160px;width:15px;height:333px;background:#dadada;"></div>
<div class="a" style="left:111px;top:160px;width:13px;height:13px;background:#fff;border:1px solid #ababab;"></div>
<svg style="left:115px;top:165px" width="7" height="4" viewBox="0 0 7 4"><path d="M0 4h7L3.500 0z" fill="#777"/></svg>
<div class="a" style="left:111px;top:322px;width:13px;height:71px;background:#fff;border:1px solid #ababab;"></div>
<div class="a" style="left:111px;top:478px;width:13px;height:13px;background:#fff;border:1px solid #ababab;"></div>
<svg style="left:115px;top:483px" width="7" height="4" viewBox="0 0 7 4"><path d="M0 0h7L3.500 4z" fill="#666"/></svg>
<div class="a" style="left:1px;top:231px;width:117px;height:62px;border:3px solid #ed1c24;"></div>
</div></div>
<div class="a" style="left:130px;top:160px;width:1px;height:335px;background:#c4c4c4;"></div>
<div class="a" style="left:136px;top:161px;width:14px;height:14px;background:#fff;border:1px solid #d0d0d0;"></div>
<svg style="left:141px;top:166px" width="6" height="6" viewBox="0 0 6 6" fill="none" stroke="#555" stroke-width="1.600"><path d="M0.800 0v5.200H6"/></svg>
<div class="a" style="left:138px;top:186px;width:13px;height:270px;background:#c6c6c6;"></div>
<div class="a" style="left:138px;top:255px;width:13px;height:11px;background:#fff;"></div>
<svg style="left:138px;top:186px" width="13" height="270" viewBox="0 0 13 270"><text x="0" y="0" transform="translate(10.400,9.0) rotate(-90)" text-anchor="middle" font-family="Liberation Sans, sans-serif" font-size="10.500" fill="#444">4</text><text x="0" y="0" transform="translate(10.400,38.9) rotate(-90)" text-anchor="middle" font-family="Liberation Sans, sans-serif" font-size="10.500" fill="#444">2</text><text x="0" y="0" transform="translate(10.400,98.7) rotate(-90)" text-anchor="middle" font-family="Liberation Sans, sans-serif" font-size="10.500" fill="#444">2</text><text x="0" y="0" transform="translate(10.400,128.6) rotate(-90)" text-anchor="middle" font-family="Liberation Sans, sans-serif" font-size="10.500" fill="#444">4</text><text x="0" y="0" transform="translate(10.400,158.6) rotate(-90)" text-anchor="middle" font-family="Liberation Sans, sans-serif" font-size="10.500" fill="#444">6</text><text x="0" y="0" transform="translate(10.400,188.5) rotate(-90)" text-anchor="middle" font-family="Liberation Sans, sans-serif" font-size="10.500" fill="#444">8</text><text x="0" y="0" transform="translate(10.400,218.4) rotate(-90)" text-anchor="middle" font-family="Liberation Sans, sans-serif" font-size="10.500" fill="#444">10</text><text x="0" y="0" transform="translate(10.400,248.3) rotate(-90)" text-anchor="middle" font-family="Liberation Sans, sans-serif" font-size="10.500" fill="#444">12</text><path d="M3.500 1.5h5M3.500 16.5h5M3.500 23.5h5M3.500 31.5h5M3.500 46.5h5M3.500 53.5h5M3.500 61.5h5M3.500 68.5h5M3.500 76.5h5M3.500 83.5h5M3.500 91.5h5M3.500 106.5h5M3.500 113.5h5M3.500 121.5h5M3.500 136.5h5M3.500 143.5h5M3.500 151.5h5M3.500 166.5h5M3.500 173.5h5M3.500 181.5h5M3.500 195.5h5M3.500 203.5h5M3.500 210.5h5M3.500 225.5h5M3.500 233.5h5M3.500 240.5h5M3.500 255.5h5M3.500 263.5h5" stroke="#555" stroke-width="1"/></svg>
<div class="a" style="left:243px;top:162.500px;width:380px;height:13.500px;background:#dcdcdc;"></div>
<div class="a" style="left:252px;top:162.500px;width:368px;height:13.500px;background:#fff;"></div>
<div class="a" style="left:243px;top:176px;width:380px;height:6px;background:#e1e1e1;"></div>
<svg style="left:243px;top:161px" width="381" height="22" viewBox="0 0 381 22"><text x="35.3" y="12" text-anchor="middle" font-family="Liberation Sans, sans-serif" font-size="10.500" fill="#444">2</text><text x="65.2" y="12" text-anchor="middle" font-family="Liberation Sans, sans-serif" font-size="10.500" fill="#444">4</text><text x="95.2" y="12" text-anchor="middle" font-family="Liberation Sans, sans-serif" font-size="10.500" fill="#444">6</text><text x="125.1" y="12" text-anchor="middle" font-family="Liberation Sans, sans-serif" font-size="10.500" fill="#444">8</text><text x="155.0" y="12" text-anchor="middle" font-family="Liberation Sans, sans-serif" font-size="10.500" fill="#444">10</text><text x="184.9" y="12" text-anchor="middle" font-family="Liberation Sans, sans-serif" font-size="10.500" fill="#444">12</text><text x="214.8" y="12" text-anchor="middle" font-family="Liberation Sans, sans-serif" font-size="10.500" fill="#444">14</text><text x="244.8" y="12" text-anchor="middle" font-family="Liberation Sans, sans-serif" font-size="10.500" fill="#444">16</text><text x="274.7" y="12" text-anchor="middle" font-family="Liberation Sans, sans-serif" font-size="10.500" fill="#444">18</text><text x="304.6" y="12" text-anchor="middle" font-family="Liberation Sans, sans-serif" font-size="10.500" fill="#444">20</text><text x="334.5" y="12" text-anchor="middle" font-family="Liberation Sans, sans-serif" font-size="10.500" fill="#444">22</text><text x="364.4" y="12" text-anchor="middle" font-family="Liberation Sans, sans-serif" font-size="10.500" fill="#444">24</text><path d="M12.5 5v5M20.5 5v5M27.5 5v5M42.5 5v5M50.5 5v5M57.5 5v5M72.5 5v5M80.5 5v5M87.5 5v5M102.5 5v5M110.5 5v5M117.5 5v5M132.5 5v5M140.5 5v5M147.5 5v5M162.5 5v5M169.5 5v5M177.5 5v5M192.5 5v5M199.5 5v5M207.5 5v5M222.5 5v5M229.5 5v5M237.5 5v5M252.5 5v5M259.5 5v5M267.5 5v5M282.5 5v5M289.5 5v5M297.5 5v5M312.5 5v5M319.5 5v5M327.5 5v5M342.5 5v5M349.5 5v5M356.5 5v5M371.5 5v5M379.5 5v5" stroke="#555" stroke-width="1"/><path d="M44.5 16.200v4.600M82.6 16.200v4.600M120.7 16.200v4.600M158.8 16.200v4.600M196.9 16.200v4.600M235.0 16.200v4.600M273.1 16.200v4.600M311.2 16.200v4.600M349.3 16.200v4.600" stroke="#7a7a7a" stroke-width="2.600"/><path d="M1.500 0.500h8L5.500 7.700zM1.500 15L5.500 8.300l4 6.700zM1.500 15.500h8v5.500h-8z" fill="#fff" stroke="#7a7a7a" stroke-width="1"/></svg>
<div class="a" id="slide" style="left:243px;top:184.500px;width:380px;height:273.500px;background:#fff;overflow:hidden;">
<div class="a" style="left:0;top:0;width:380px;height:34px;background:#701512;"></div>
<div class="a" style="left:0;top:253px;width:380px;height:21px;background:#701512;"></div>
</div>
<span class="t" id="sTitle" style="top:194px;font-size:11.500px;font-weight:bold;color:#fff;letter-spacing:-0.13px;left:247.5px;">Data Dictionary(DD)</span>
<span class="t" id="sEmp" style="top:235px;font-size:9.500px;color:#111;letter-spacing:-0.01px;left:257.3px;">Employee Details</span>
<span class="t" id="sRed" style="top:268px;font-size:16px;font-weight:bold;color:#ed1c24;letter-spacing:0.34px;left:282.2px;">*Slide where to insert Excel data *</span>
<span class="t" id="sGuide" style="top:447px;font-size:7.600px;font-weight:bold;font-style:italic;color:#f5e614;letter-spacing:-0.17px;left:310.7px;">Guidelines: Add more slides, if required to show all DFDs</span>
<span class="t" id="sTMU1" style="top:188px;font-size:11.300px;font-weight:bold;color:#f08c28;letter-spacing:0.32px;left:533.7px;">TEERTHANKER</span>
<span class="t" id="sTMU2x" style="left:535px;top:201px;font-size:8.500px;color:#e38b2e;transform:scaleX(0.836);">MAHAVEER UNIVERSITY</span>
<svg style="left:500px;top:185px" width="33" height="26" viewBox="0 0 33 26">
  <defs><linearGradient id="lg1" x1="0" y1="0" x2="0" y2="1"><stop offset="0" stop-color="#f8cfa0"/><stop offset="0.550" stop-color="#f3a55a"/><stop offset="1" stop-color="#ee8e3a"/></linearGradient></defs>
  <circle cx="16.200" cy="10.300" r="10.800" fill="#5a100c"/>
  <circle cx="16.200" cy="10.300" r="10.300" fill="none" stroke="#c8742c" stroke-width="0.500"/>
  <circle cx="16.200" cy="9.800" r="9.500" fill="url(#lg1)"/>
  <path d="M6.500 12.200c3.300-1.300 6.600-1.100 9.700 0.700 3.100-1.800 6.400-2 9.700-0.700v3.600c-3.300-1-6.600-0.800-9.700 0.800-3.100-1.600-6.400-1.800-9.700-0.800z" fill="#3fa03a"/>
  <path d="M9 11.800c2.500-0.900 4.900-0.700 7.200 0.500 2.300-1.200 4.700-1.400 7.200-0.500v1.900c-2.500-0.700-4.900-0.500-7.200 0.700-2.300-1.200-4.700-1.400-7.200-0.700z" fill="#f6f3ea"/>
  <text x="16.200" y="8.900" text-anchor="middle" font-family="Liberation Serif, serif" font-size="6.800" font-weight="bold" fill="#4a140c">TMU</text>
  <path d="M0.400 16.200c4.200 3 9.600 4.400 15.800 4.400s11.600-1.400 15.800-4.400l-2 5.300c-4 2.100-8.700 3.100-13.800 3.100s-9.800-1-13.800-3.100z" fill="#f3e0c2"/>
  <path d="M4 19.800c3.700 1.700 7.700 2.500 12.200 2.500s8.500-0.800 12.200-2.500" fill="none" stroke="#a8482a" stroke-width="1" stroke-dasharray="1.300 0.700"/>
</svg>
<svg style="left:237px;top:210px" width="393" height="234" viewBox="0 0 393 234" fill="none"><path d="M6.500 41.500h380v186h-380z" stroke="#6e6e6e" stroke-width="1" stroke-dasharray="1.500 1.500"/><path d="M196.500 36.500v-18" stroke="#999" stroke-width="1"/><g fill="#fff" stroke="#8a8a8a" stroke-width="1.800"><circle cx="6.500" cy="41.500" r="4.500"/><circle cx="196.500" cy="41.500" r="4.500"/><circle cx="386.500" cy="41.500" r="4.500"/><circle cx="6.500" cy="134.500" r="4.500"/><circle cx="386.500" cy="134.500" r="4.500"/><circle cx="6.500" cy="227.500" r="4.500"/><circle cx="196.500" cy="227.500" r="4.500"/><circle cx="386.500" cy="227.500" r="4.500"/></g><path d="M203.400 6.600A7.500 7.500 0 1 0 200.400 14.100" stroke="#9a9a9a" stroke-width="4.800"/><path d="M197.600 6l13.600 0.800-6.900 7.600z" fill="#fff" stroke="#9a9a9a" stroke-width="1.200" stroke-linejoin="round"/><path d="M203.400 6.600A7.500 7.500 0 1 0 200.400 14.100" stroke="#fff" stroke-width="2.500"/><path d="M199.400 6.800l10 0.600-5.100 5.600z" fill="#fff"/></svg>
<div class="a" style="left:247px;top:255px;width:1px;height:14px;background:#222;"></div>
<svg style="left:367px;top:312px" width="134" height="68" viewBox="0 0 134 68" fill="none">
  <!-- table -->
  <rect x="1.300" y="3" width="27.500" height="25" fill="#fff" stroke="#a9a9a9" stroke-width="1"/>
  <rect x="1.300" y="3" width="27.500" height="4.500" fill="#b3b3b3"/>
  <path d="M1.300 12.500h27.500M1.300 17.600h27.500M1.300 22.700h27.500M10.500 7.500v20.500M19.700 7.500v20.500" stroke="#cfcfcf" stroke-width="1"/>
  <!-- chart -->
  <rect x="37" y="10.500" width="7.300" height="18.300" fill="#9dbbe0"/><rect x="45" y="2.700" width="7.300" height="26.100" fill="#f3dcae"/><rect x="53" y="7.600" width="7.300" height="21.200" fill="#b5b5b5"/>
  <!-- smartart -->
  <path d="M68.500 4h20l5.800 8.500-5.800 8.500h-20l5-8.500z" fill="#b3d0c5"/>
  <rect x="78" y="12.500" width="20" height="13.500" fill="#fff" stroke="#a9a9a9" stroke-width="1"/>
  <path d="M82 17h2M86 17h8M82 20h2M86 20h8M82 23h2M86 23h8" stroke="#c8c8c8" stroke-width="1"/>
  <!-- 3d model -->
  <path d="M104.500 8l12-7 12 7v13.500l-12 7-12-7z" fill="#fff" stroke="#a9a9a9" stroke-width="1.200"/>
  <path d="M104.500 8l8 4.700M128.500 8l-12 7v13.500" stroke="#a9a9a9" stroke-width="1.200"/>
  <circle cx="125.700" cy="24.300" r="6.800" fill="#fff" stroke="#9dbbe0" stroke-width="1.600"/>
  <path d="M125.700 17.300v14M119.700 21.300h12M119.700 27.300h12" stroke="#9dbbe0" stroke-width="1.100"/>
  <ellipse cx="125.700" cy="24.300" rx="3.300" ry="7" stroke="#9dbbe0" stroke-width="1"/>
  <!-- pictures -->
  <rect x="1.300" y="36.500" width="27" height="27" fill="#fff" stroke="#a9a9a9" stroke-width="1"/>
  <circle cx="21.500" cy="43" r="3" fill="#f3dcae"/>
  <path d="M3 62l9-11 6 7 3-3 6 7z" fill="#dbe6f4"/>
  <rect x="15.500" y="51" width="15" height="10.500" fill="#fff" stroke="#9dbbe0" stroke-width="1.400"/><path d="M23 62v2.500M19.500 65h7" stroke="#9dbbe0" stroke-width="1.200"/>
  <!-- online pictures -->
  <rect x="35.500" y="36.500" width="27" height="27" fill="#fff" stroke="#a9a9a9" stroke-width="1"/>
  <circle cx="55.500" cy="43" r="3" fill="#f3dcae"/>
  <path d="M37 62l9-11 6 7 3-3 6 7z" fill="#dbe6f4"/>
  <circle cx="57.800" cy="58" r="6.800" fill="#fff" stroke="#9dbbe0" stroke-width="1.600"/>
  <path d="M57.800 51v14M51.800 55h12M51.800 61h12" stroke="#9dbbe0" stroke-width="1.100"/>
  <ellipse cx="57.800" cy="58" rx="3.300" ry="7" stroke="#9dbbe0" stroke-width="1"/>
  <!-- video -->
  <rect x="71.500" y="38" width="23.500" height="22.500" fill="#fff" stroke="#a9a9a9" stroke-width="1.200"/>
  <rect x="71.500" y="38" width="23.500" height="4.500" fill="#a9a9a9"/><rect x="71.500" y="56" width="23.500" height="4.500" fill="#a9a9a9"/>
  <path d="M73.500 40.200h20M73.500 58.200h20" stroke="#fff" stroke-width="1.800" stroke-dasharray="2 1.600"/>
  <!-- icons: duck + leaf -->
  <circle cx="120.900" cy="38.600" r="4.600" fill="#9dbbe0"/>
  <path d="M124.600 36.800l6.600 2.300-5.600 2.700z" fill="#9dbbe0"/>
  <path d="M103.500 42.100C107 45.600 111 46 114.500 44.500 116.500 43.500 117.300 42 117.800 40.500L124.500 41.500C126.500 45 125 50 121 53 117 56.500 111 57 108 54.500 105 52 103.600 47 103.500 42.100Z" fill="#9dbbe0"/>
  <path d="M112.700 59.400C111.500 53 117 47.500 129.100 47.400 130.500 55 126 61.500 117.500 61.200 115.500 61.100 113.800 60.500 112.700 59.400Z" fill="#fff" stroke="#a9a9a9" stroke-width="1.300"/>
  <path d="M110 64.800C111.500 60 115.500 55.500 122.500 53" stroke="#a9a9a9" stroke-width="1.300"/>
</svg>
<div class="a" style="left:706.300px;top:160px;width:14.500px;height:244px;background:#dadada;"></div>
<div class="a" style="left:706.300px;top:160px;width:12.500px;height:13px;background:#fff;border:1px solid #ababab;"></div>
<svg style="left:709.800px;top:165px" width="7" height="4" viewBox="0 0 7 4"><path d="M0 4h7L3.500 0z" fill="#777"/></svg>
<div class="a" style="left:706.300px;top:287.500px;width:12.500px;height:15.500px;background:#fff;border:1px solid #ababab;"></div>
<div class="a" style="left:706.300px;top:390.500px;width:12.500px;height:13px;background:#fff;border:1px solid #ababab;"></div>
<svg style="left:709.800px;top:395.500px" width="7" height="4" viewBox="0 0 7 4"><path d="M0 0h7L3.500 4z" fill="#666"/></svg>
<svg style="left:710px;top:409.500px" width="8" height="9" viewBox="0 0 8 9"><path d="M0 4h8L4 0zM0 9h8L4 5z" fill="#666"/></svg>
<svg style="left:710px;top:427.500px" width="8" height="9" viewBox="0 0 8 9"><path d="M0 0h8L4 4zM0 5h8L4 9z" fill="#666"/></svg>
<div class="a" style="left:131px;top:458px;width:591px;height:37px;background:#e6e6e6;"></div>
<div class="a" style="left:134px;top:461px;width:588px;height:1px;background:#c6c6c6;"></div>
<span class="t" id="notes" style="top:470px;font-size:15px;color:#5a5a5a;letter-spacing:-0.13px;left:142.2px;">Click to add notes</span>
<div class="a" style="left:1px;top:495px;width:721px;height:22px;background:#f3f3f3;border-top:1px solid #d6d6d6;box-sizing:border-box;"></div>
<span class="t" id="st1" style="top:500px;color:#444;letter-spacing:-0.06px;left:8.8px;">Slide 13 of 22</span>
<svg style="left:96px;top:499px" width="16" height="13" viewBox="0 0 16 13" fill="none" stroke="#666" stroke-width="1"><path d="M7.500 2.500C5.500 1 3 1 0.500 1.500v9.500c2.500-0.500 5-0.500 7 1V2.500zM7.500 2.500c1-0.800 2-1.200 3.500-1.300"/><path d="M7.500 12v1"/><path d="M10 3.500l5 6M15 3.500l-5 6" stroke-width="1.300"/></svg>
<svg style="left:197px;top:499px" width="12" height="13" viewBox="0 0 12 13"><path d="M0 5.500h11.500M0 8.500h11.500M0 11.500h6.500" stroke="#555" stroke-width="1" fill="none"/><path d="M3.500 3.600h4.600L5.800 0.800z" fill="#555"/></svg>
<span class="t" id="st2" style="top:501px;color:#333;letter-spacing:-0.14px;left:213.2px;">Notes</span>
<svg style="left:263px;top:499px" width="15" height="14" viewBox="0 0 15 14"><path d="M0.500 0.500h13.500v9H7l-3.800 3.800V9.500H0.500z" fill="#5a5a5a"/></svg>
<span class="t" id="st3" style="top:501px;color:#333;letter-spacing:-0.34px;left:280.5px;">Comments</span>
<div class="a" style="left:353px;top:496px;width:40px;height:21px;background:#c8c8c8;"></div>
<svg style="left:366px;top:499px" width="15" height="14" viewBox="0 0 15 14" fill="none" stroke="#666" stroke-width="1.100"><rect x="0.600" y="0.600" width="13.800" height="12.800"/><path d="M4 0.600v12.800M4 9h10.400"/><rect x="6.500" y="3" width="5.500" height="3.500"/></svg>
<svg style="left:405.500px;top:499px" width="15" height="14" viewBox="0 0 15 14" fill="none" stroke="#666" stroke-width="1.100"><rect x="0.600" y="0.600" width="5" height="4.300"/><rect x="9.400" y="0.600" width="5" height="4.300"/><rect x="0.600" y="8.600" width="5" height="4.300"/><rect x="9.400" y="8.600" width="5" height="4.300"/></svg>
<svg style="left:446px;top:499px" width="14" height="14" viewBox="0 0 14 14" fill="none" stroke="#666" stroke-width="1"><path d="M7 2C5.200 0.800 3 0.600 0.500 1v10.500c2.500-0.400 4.700-0.200 6.500 1 1.800-1.200 4-1.400 6.500-1V1C11 0.600 8.800 0.800 7 2zM7 2v12"/><path d="M2 3.500h3.500M2 5.500h3.500M2 7.500h3.500M2 9.500h3.500M8.500 3.500H12M8.500 5.500H12M8.500 7.500H12M8.500 9.500H12" stroke-width="0.800"/></svg>
<svg style="left:486px;top:499px" width="14" height="14" viewBox="0 0 14 14" fill="none" stroke="#666" stroke-width="1.100"><path d="M0 1h14"/><path d="M1.500 1v6h11V1"/><path d="M7 7v5.500M4 13h6"/></svg>
<div class="a" style="left:519px;top:505px;width:8px;height:1px;background:#444;"></div>
<div class="a" style="left:532px;top:505px;width:100px;height:1px;background:#555;"></div>
<div class="a" style="left:582px;top:502px;width:1px;height:7px;background:#555;"></div>
<div class="a" style="left:548px;top:501px;width:5px;height:11px;background:#666;"></div>
<div class="a" style="left:637px;top:505px;width:8px;height:1px;background:#444;"></div><div class="a" style="left:640.500px;top:501.500px;width:1px;height:8px;background:#444;"></div>
<span class="t" id="st4" style="top:501px;color:#333;letter-spacing:-0.51px;left:657.5px;">40%</span>
<svg style="left:692.500px;top:499px" width="13" height="14" viewBox="0 0 13 14" fill="none" stroke="#666" stroke-width="1"><rect x="0.500" y="0.500" width="12" height="13"/><path d="M6.500 2v3.500M6.500 8.500V12M2 7h3M8 7h3" /><path d="M5 4l1.500 1.500L8 4M5 10l1.500-1.500L8 10" /></svg>
<span class="t" id="an1" style="top:240px;font-size:15px;font-weight:bold;color:#ed1c24;letter-spacing:-0.30px;left:129.9px;">Currently</span>
<span class="t" id="an2" style="top:258px;font-size:15px;font-weight:bold;color:#ed1c24;letter-spacing:-0.31px;left:129.9px;">opened</span>
<span class="t" id="an3" style="top:277px;font-size:15px;font-weight:bold;color:#ed1c24;letter-spacing:-0.77px;left:129.9px;">slide</span>
<div class="a" style="left:251px;top:456.500px;width:2px;height:1.500px;background:#e8dcdc;"></div><div class="a" style="left:254px;top:456.500px;width:1.500px;height:1.500px;background:#e8dcdc;"></div>

<!-- ===== WINDOW BORDER ===== -->
<div class="a" style="left:0;top:65px;width:1px;height:453px;background:#b7472a;"></div>
<div class="a" style="left:722px;top:65px;width:1px;height:453px;background:#b7472a;"></div>
<div class="a" style="left:0;top:517px;width:723px;height:1px;background:#b7472a;"></div>

</div>
</body>
</html>
